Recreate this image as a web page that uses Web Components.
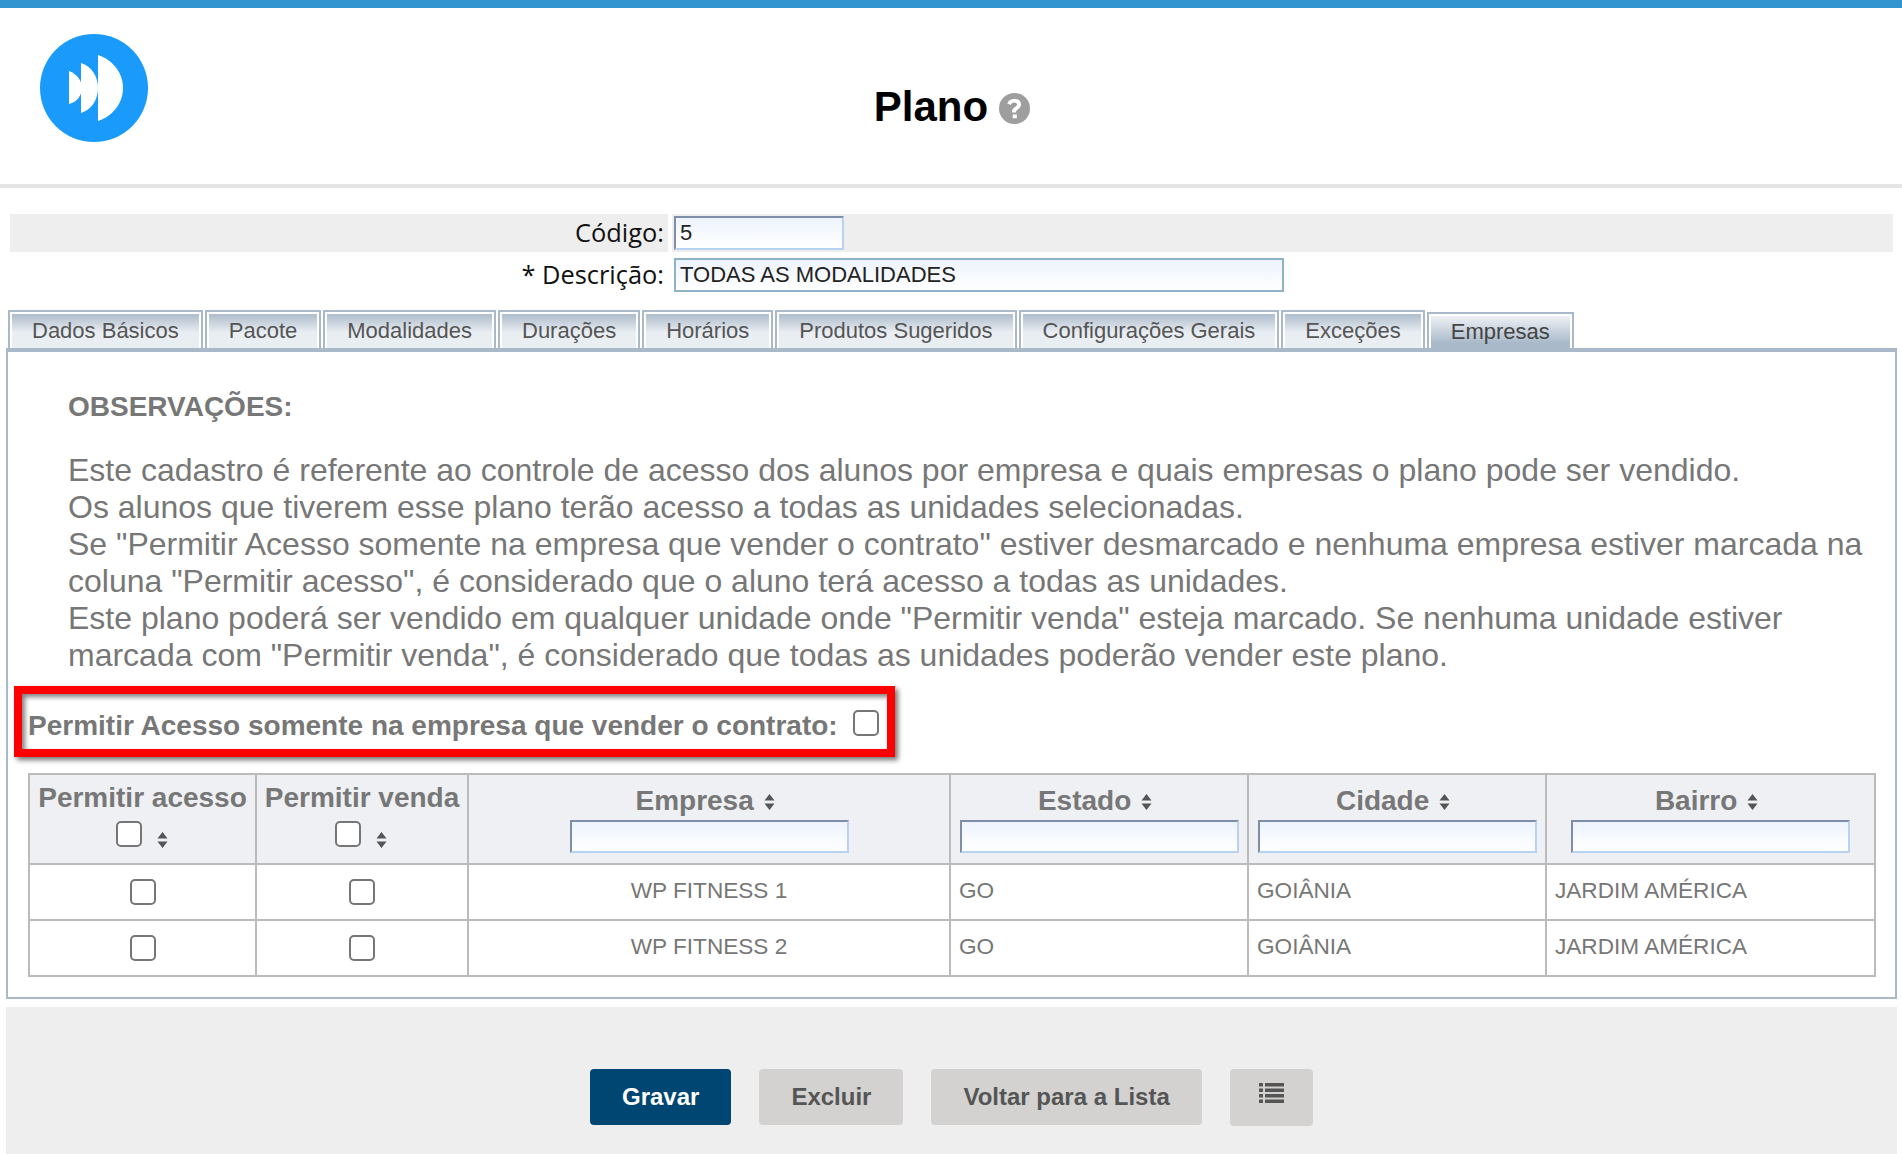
<!DOCTYPE html>
<html lang="pt-BR"><head><meta charset="utf-8"><title>Plano</title>
<style>
html,body{margin:0;padding:0;background:#fff;height:1154px;overflow:hidden}
body{font-family:"Liberation Sans",Arial,sans-serif;color:#777}
</style></head><body>
<x-plan-page></x-plan-page>
<script>
const fieldCss=`input[type=text]{box-sizing:border-box;display:block;margin:0;border:2px solid;border-color:#7f8ea8 #b8d2f2 #b8d2f2 #7f8ea8;background:linear-gradient(#edf3fd,#fff);font:22px "Liberation Sans",Arial,sans-serif;color:#222;padding:0 4px;outline:none;border-radius:0}`;
const checkCss=`input[type=checkbox]{appearance:none;-webkit-appearance:none;box-sizing:border-box;width:26px;height:26px;margin:0;border:2px solid #767676;border-radius:5px;background:#fff;display:inline-block;vertical-align:middle}`;
const sortIcon=`<svg width="11" height="16" viewBox="0 0 11 16" aria-hidden="true"><path d="M5.5 0 10.5 6.500H.5z M5.500 16 .5 9.500H10.500z" fill="#555"/></svg>`;
class Base extends HTMLElement{
  render(html){this.attachShadow({mode:'open'}).innerHTML=html}
}
customElements.define('x-top-header',class extends Base{connectedCallback(){this.render(`<style>
:host{display:block;box-sizing:border-box;height:188px;border-top:8px solid #3295d0;border-bottom:4px solid #e4e4e4;position:relative}
.wrap{display:flex;height:100%;padding:26px 0 0 40px;box-sizing:border-box}
.logo{flex:none;width:108px;height:108px;display:block}
.title{flex:1;display:flex;justify-content:center;align-items:center;gap:11px;margin:44px 146px 0 0;height:58px}
h1{margin:0;font:700 42px/58px "Liberation Sans",Arial,sans-serif;color:#000}
svg.help{width:31px;height:31px;margin-top:3px}
</style><div class="wrap">
<svg class="logo" viewBox="0 0 108 108"><circle cx="54" cy="54" r="54" fill="#1a9bfc"/>
<path fill="#fff" d="M29 37C37 40 42 47 42 54S37 68 29 70Z"/>
<path fill="#fff" d="M41 29C51 32 58 42 58 54S51 76 41 79Z"/>
<path fill="#fff" d="M58 21C73 26 83 39 83 54S73 82 58 87Z"/></svg>
<div class="title"><h1>Plano</h1>
<svg class="help" viewBox="0 0 24 24"><circle cx="12" cy="12" r="12" fill="#9e9e9e"/><path fill="#fff" d="M11.900 4.600c-3 0-4.800 1.300-5.500 3.600l2.700 1c.4-1.200 1.200-1.900 2.600-1.900 1.300 0 2.200.6 2.200 1.600 0 .9-.6 1.300-1.600 2-1.300.9-2.200 1.800-2.200 3.600v.6h3.100v-.4c0-.9.4-1.300 1.400-2 1.300-.9 2.500-2 2.500-4 0-2.600-2-4.100-4.800-4.100zM10.600 16.600h3.200v3h-3.200z"/></svg></div></div>`)}});
customElements.define('x-form-row',class extends Base{connectedCallback(){
 const w=this.getAttribute('width'),shade=this.hasAttribute('shade');
 this.render(`<style>${fieldCss}
:host{display:grid;grid-template-columns:658px 1fr;column-gap:4px;height:38px;margin:0 9px 0 10px;font:25.4px "Open Sans",sans-serif;color:#111}
.l,.f{background:${shade?'#eee':'transparent'};display:flex;align-items:center}
.l{justify-content:flex-end;padding-right:4px;padding-bottom:2px;box-sizing:border-box}
.f{padding-left:2px}
input[type=text]{width:${w}px;height:34px${shade?'':';border-color:#8eb3c6'}}
</style><div class="l"><slot></slot></div><div class="f"><input type="text" value="${this.getAttribute('value')}"></div>`)}});
customElements.define('x-tabs',class extends Base{connectedCallback(){
 const names=JSON.parse(this.getAttribute('names')),active=this.getAttribute('active');
 this.render(`<style>
:host{display:flex;align-items:flex-end;gap:2px;padding-left:8px;height:38px;font:22px "Liberation Sans",Arial,sans-serif;color:#555}
.t{box-sizing:border-box;height:38px;padding:2px 2px 0;border:2px solid #a9b9ca;border-bottom:0;background:#fff}
.t span{display:block;height:100%;padding:0 20px;line-height:33px;background:linear-gradient(#aebccb,#e9eef3 55%,#e9eef3);white-space:nowrap}
.t.on{height:36px}
.t.on span{background:linear-gradient(#eef1f5,#a9b9ca 85%);color:#444;line-height:32px}
</style>${names.map(n=>`<div class="t${n===active?' on':''}"><span>${n}</span></div>`).join('')}`)}});
customElements.define('x-notes',class extends Base{connectedCallback(){this.render(`<style>
:host{display:block;padding:37px 20px 0 60px;font:32px/37px "Liberation Sans",Arial,sans-serif;color:#777}
h2{margin:0 0 26px;font:700 28px/36.8px "Liberation Sans",Arial,sans-serif;color:#777}
p{margin:0}
</style><h2>OBSERVAÇÕES:</h2><p><slot></slot></p>`)}});
customElements.define('x-highlight',class extends Base{connectedCallback(){this.render(`<style>${checkCss}
:host{display:block;box-sizing:border-box;width:881px;height:71px;margin:12px 0 0 6px;border:8px solid #f00;box-shadow:3px 3px 5px rgba(0,0,0,.55),inset 3px 3px 5px rgba(0,0,0,.5);background:#fff}
.r{display:flex;align-items:center;height:55px;box-sizing:border-box;padding:10px 0 0 6px;font:700 28px "Liberation Sans",Arial,sans-serif;color:#777;gap:15px}
input{position:relative;top:-3px}
</style><div class="r"><span>Permitir Acesso somente na empresa que vender o contrato:</span><input type="checkbox"></div>`)}});
customElements.define('x-companies',class extends Base{connectedCallback(){
 const rows=[['WP FITNESS 1','GO','GOIÂNIA','JARDIM AMÉRICA'],['WP FITNESS 2','GO','GOIÂNIA','JARDIM AMÉRICA']];
 const h=n=>`<th><div class="n">${n} ${sortIcon}</div><input type="text"></th>`;
 const c=n=>`<th class="c"><div class="n2">${n}</div><div class="cs"><input type="checkbox">${sortIcon}</div></th>`;
 this.render(`<style>${fieldCss}${checkCss}
:host{display:block;margin:16px 0 0 20px;font:22.6px "Liberation Sans",Arial,sans-serif;color:#777}
table{border-collapse:collapse;table-layout:fixed;width:1846px}
th,td{border:2px solid #bbb;padding:0}
thead tr{height:90px}tbody tr{height:56px}
th{background:#eef0f3;font:700 28px "Liberation Sans",Arial,sans-serif;color:#777;vertical-align:top;text-align:center}
.n{height:45px;line-height:52px;padding-right:8px}.n svg{margin-left:2px}
th input[type=text]{width:279px;height:33px;margin:0 auto}
.n2{height:46px;line-height:46px;white-space:nowrap}
.cs{display:flex;justify-content:center;align-items:flex-start;gap:15px;padding-right:2px;height:38px;box-sizing:border-box}
.cs svg{margin-top:11px}
td{text-align:left;padding:0 0 2px 8px;vertical-align:middle}
td.ce{text-align:center;padding:0 0 2px}td.k{text-align:center;padding:0;line-height:0}
</style><table><colgroup><col style="width:227px"><col style="width:212px"><col style="width:482px"><col style="width:298px"><col style="width:298px"><col style="width:329px"></colgroup>
<thead><tr>${c('Permitir acesso')}${c('Permitir venda')}${h('Empresa')}${h('Estado')}${h('Cidade')}${h('Bairro')}</tr></thead>
<tbody>${rows.map(r=>`<tr><td class="k"><input type="checkbox"></td><td class="k"><input type="checkbox"></td><td class="ce">${r[0]}</td><td>${r[1]}</td><td>${r[2]}</td><td>${r[3]}</td></tr>`).join('')}</tbody></table>`)}});
customElements.define('x-panel',class extends Base{connectedCallback(){this.render(`<style>
:host{display:block;box-sizing:border-box;height:651px;margin:0 5px 0 6px;border:2px solid #a9b9ca;border-top-width:4px;background:#fff}
</style><slot></slot>`)}});
customElements.define('x-btn',class extends Base{connectedCallback(){
 const p=this.hasAttribute('primary');
 this.render(`<style>
:host{display:flex;align-items:center;justify-content:center;box-sizing:border-box;height:56px;padding:0 32px;border-radius:4px;background:${p?'#004672':'#d3d2d0'};color:${p?'#fff':'#555'};font:700 24px "Liberation Sans",Arial,sans-serif}
</style><slot></slot>`)}});
customElements.define('x-footer-bar',class extends Base{connectedCallback(){this.render(`<style>
:host{display:flex;justify-content:flex-start;align-items:flex-start;gap:28px;box-sizing:border-box;height:147px;margin:8px 5px 0 6px;padding:62px 0 0 584px;background:#eee}
</style><slot></slot>`)}});
customElements.define('x-plan-page',class extends Base{connectedCallback(){this.render(`<style>
:host{display:block}
.forms{display:flex;flex-direction:column;gap:4px;padding-top:26px;margin-bottom:16px}
</style>
<x-top-header></x-top-header>
<div class="forms"><x-form-row shade value="5" width="170">Código:</x-form-row><x-form-row value="TODAS AS MODALIDADES" width="610">* Descrição:</x-form-row></div>
<x-tabs active="Empresas" names='["Dados Básicos","Pacote","Modalidades","Durações","Horários","Produtos Sugeridos","Configurações Gerais","Exceções","Empresas"]'></x-tabs>
<x-panel>
<x-notes>Este cadastro é referente ao controle de acesso dos alunos por empresa e quais empresas o plano pode ser vendido.<br>Os alunos que tiverem esse plano terão acesso a todas as unidades selecionadas.<br>Se "Permitir Acesso somente na empresa que vender o contrato" estiver desmarcado e nenhuma empresa estiver marcada na coluna "Permitir acesso", é considerado que o aluno terá acesso a todas as unidades.<br>Este plano poderá ser vendido em qualquer unidade onde "Permitir venda" esteja marcado. Se nenhuma unidade estiver marcada com "Permitir venda", é considerado que todas as unidades poderão vender este plano.</x-notes>
<x-highlight></x-highlight>
<x-companies></x-companies>
</x-panel>
<x-footer-bar><x-btn primary>Gravar</x-btn><x-btn>Excluir</x-btn><x-btn>Voltar para a Lista</x-btn><x-btn style="height:57px;padding:0 29px"><svg style="width:25px;height:20px;display:block;margin-top:-10px" viewBox="0 0 25 20"><path fill="#555" d="M0 0h4v3.500H0zM6 0h19v3.500H6zM0 5.500h4V9H0zM6 5.500h19V9H6zM0 11h4v3.500H0zM6 11h19v3.500H6zM0 16.500h4V20H0zM6 16.500h19V20H6z"/></svg></x-btn></x-footer-bar>`)}});
</script></body></html>
